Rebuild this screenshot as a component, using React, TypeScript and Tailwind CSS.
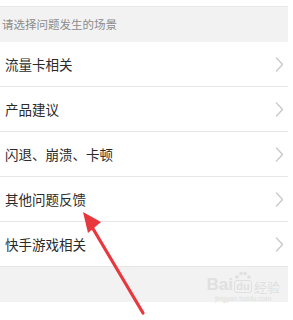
const items = ["流量卡相关", "产品建议", "闪退、崩溃、卡顿", "其他问题反馈", "快手游戏相关"];

function Chevron() {
  return (
    <svg width="9" height="15" viewBox="0 0 9 15" fill="none">
      <path d="M1.5 1 L7.5 7.5 L1.5 14" stroke="#c8c8c8" strokeWidth="1.3" strokeLinecap="round" strokeLinejoin="round" />
    </svg>
  );
}

function Paw() {
  return (
    <svg width="18" height="9" viewBox="0 0 18 9" fill="#e0e0e0">
      <circle cx="3" cy="6" r="1.8" />
      <circle cx="7" cy="2.5" r="1.8" />
      <circle cx="11" cy="2.5" r="1.8" />
      <circle cx="15" cy="6" r="1.8" />
    </svg>
  );
}

export default function App() {
  return (
    <div
      className="relative h-[320px] w-[293px] overflow-hidden bg-white"
      style={{ fontFamily: '"Noto Sans CJK SC", "Noto Sans", sans-serif' }}
    >
      <div className="w-[288px]">
        <div className="h-[7px] border-b border-[#e8e8e8] bg-white" />
        <div className="flex h-[35px] items-center bg-[#f2f2f2] pl-[2px] text-[11.5px] text-[#8c8c8c]">
          请选择问题发生的场景
        </div>
        {items.map((t) => (
          <div
            key={t}
            className="flex h-[45px] items-center justify-between border-b border-[#e6e6e6] bg-white pl-[5px] pr-[4px] text-[13.5px] text-[#2a2a2a]"
          >
            <span>{t}</span>
            <Chevron />
          </div>
        ))}
        <div className="flex h-[35px] items-start justify-end bg-[#f2f2f2] pr-[8px] pt-[4px]">
          <div className="flex flex-col items-center leading-none text-[#e0e0e0]">
            <div className="flex items-end gap-[1px]" style={{ fontFamily: '"Liberation Sans", sans-serif' }}>
              <span className="text-[17px] font-bold">Bai</span>
              <div className="flex flex-col items-center">
                <Paw />
                <span className="rounded-[3px] border border-[#e0e0e0] px-[1px] text-[11px] font-bold">du</span>
              </div>
              <span className="ml-[1px] text-[13px]" style={{ fontFamily: '"Noto Sans CJK SC", sans-serif' }}>经验</span>
            </div>
            <span className="mt-[2px] text-[7px]" style={{ fontFamily: '"Liberation Sans", sans-serif' }}>jingyan.baidu.com</span>
          </div>
        </div>
      </div>
      <svg className="absolute left-0 top-0" width="293" height="320" viewBox="0 0 293 320">
        <line x1="143" y1="313" x2="92" y2="227" stroke="#e8383d" strokeWidth="3.2" strokeLinecap="round" />
        <polygon points="83,212 101,222 88,233" fill="#e8383d" />
      </svg>
    </div>
  );
}
